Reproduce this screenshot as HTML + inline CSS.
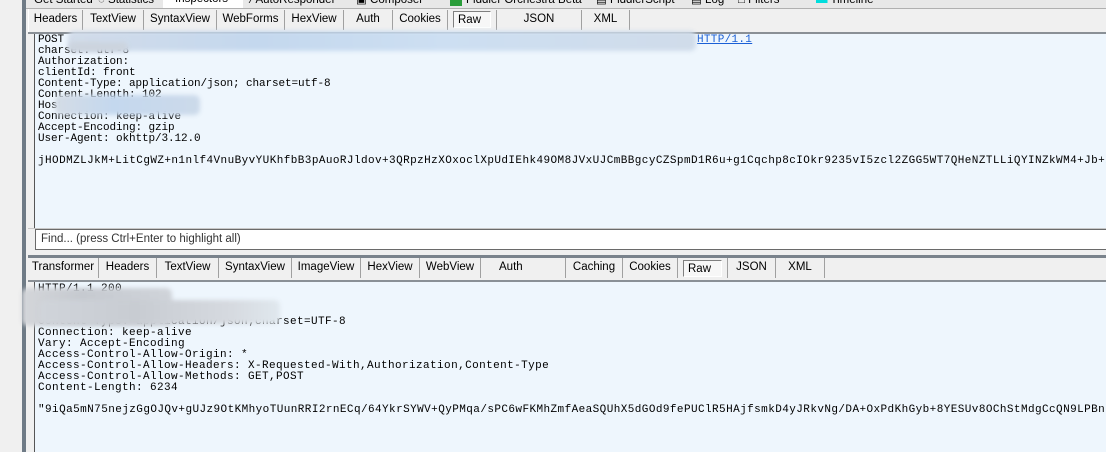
<!DOCTYPE html>
<html><head><meta charset="utf-8"><style>
*{margin:0;padding:0;box-sizing:border-box}
body{width:1106px;height:452px;overflow:hidden;background:#f0f0f0;position:relative;font-family:"Liberation Sans",sans-serif;font-size:11px;color:#000}
.a{position:absolute}
.tab{position:absolute;height:20px;line-height:19px;text-align:center;border-right:1px solid #a0a0a0;font-size:11.5px}
.raw{position:absolute;border:1px solid #808080;border-right-color:#fff;border-bottom-color:#fff;background:#f7f7f7;height:17px;line-height:16px;padding-left:4px;font-size:11.5px}
.txt{position:absolute;background:#eef6fd;font-family:"Liberation Mono",monospace;font-size:11px;line-height:11px;white-space:pre;overflow:hidden;padding-left:3px;letter-spacing:-0.1px}
.b64{letter-spacing:0.42px}
.blur{position:absolute;filter:blur(2px);border-radius:6px}
</style></head><body>
<div class="a" style="left:22px;top:0;width:4px;height:452px;background:#6f7b86"></div>
<div class="a" style="left:26px;top:0;width:1080px;height:452px;background:#f0f0f0"></div>
<div class="a" style="left:26px;top:0;width:1080px;height:9px;background:#e8e8e8;border-bottom:1px solid #b0b0b0;overflow:hidden;font-size:11.5px;line-height:4px">
 <span class="a" style="left:8px;top:-2px">Get Started</span>
 <span class="a" style="left:72px;top:-2px">◌ Statistics</span>
 <span class="a" style="left:137px;top:-3px;width:80px;height:12px;background:#fff;padding-left:12px">Inspectors</span>
 <span class="a" style="left:225px;top:-2px">⁄ AutoResponder</span>
 <span class="a" style="left:330px;top:-2px">▣ Composer</span>
 <span class="a" style="left:424px;top:-3px;width:12px;height:9px;background:#2a9d3a"></span>
 <span class="a" style="left:440px;top:-2px">Fiddler Orchestra Beta</span>
 <span class="a" style="left:570px;top:-2px">▤ FiddlerScript</span>
 <span class="a" style="left:665px;top:-2px">▤ Log</span>
 <span class="a" style="left:712px;top:-2px">□ Filters</span>
 <span class="a" style="left:790px;top:-2px"><span style="color:#0dd">▬</span> Timeline</span>
</div>
<div class="a" style="left:28px;top:9px;width:1078px;height:23px;border-left:1px solid #fff">
 <div class="tab" style="left:0;width:54px;top:1px">Headers</div>
 <div class="tab" style="left:54px;width:61px;top:1px">TextView</div>
 <div class="tab" style="left:115px;width:73px;top:1px">SyntaxView</div>
 <div class="tab" style="left:188px;width:68px;top:1px">WebForms</div>
 <div class="tab" style="left:256px;width:59px;top:1px">HexView</div>
 <div class="tab" style="left:315px;width:49px;top:1px">Auth</div>
 <div class="tab" style="left:364px;width:55px;top:1px">Cookies</div>
 <div class="raw" style="left:424px;top:2px;width:38px">Raw</div>
 <div class="tab" style="left:467px;width:86px;top:1px;border-left:1px solid #a0a0a0">JSON</div>
 <div class="tab" style="left:553px;width:48px;top:1px">XML</div>
</div>
<div class="a" style="left:28px;top:32px;width:1078px;height:2px;background:#8a9096"></div>
<div class="txt" style="left:34px;top:34px;width:1072px;height:194px;border-left:1px solid #555;padding-top:1px">POST 
charset: utf-8
Authorization:
clientId: front
Content-Type: application/json; charset=utf-8
Content-Length: 102
Host: 
Connection: keep-alive
Accept-Encoding: gzip
User-Agent: okhttp/3.12.0

<span class="b64">jHODMZLJkM+LitCgWZ+n1nlf4VnuByvYUKhfbB3pAuoRJldov+3QRpzHzXOxoclXpUdIEhk49OM8JVxUJCmBBgcyCZSpmD1R6u+g1Cqchp8cIOkr9235vI5zcl2ZGG5WT7QHeNZTLLiQYINZkWM4+Jb+/</span></div>
<span class="a" style="left:697px;top:35px;font-family:'Liberation Mono',monospace;font-size:11px;line-height:11px;color:#1a5fd6;text-decoration:underline;background:#eef6fd;letter-spacing:0.3px">HTTP/1.1</span>
<div class="blur" style="left:68px;top:31px;width:628px;height:20px;background:linear-gradient(90deg,#d2dcea,#c4d8ee 30%,#cddff2 60%,#d0dcea)"></div>
<div class="blur" style="left:68px;top:42px;width:60px;height:10px;background:#ccd4de"></div>
<div class="blur" style="left:55px;top:95px;width:145px;height:20px;background:linear-gradient(90deg,#d4dce6,#c4d8ee 40%,#ccdaea)"></div>
<div class="a" style="left:28px;top:228px;width:1078px;height:1px;background:#c8c8c8"></div>
<div class="a" style="left:35px;top:229px;width:1071px;height:21px;background:#fff;border:1px solid #6a6a6a;border-right:none;padding-left:5px;line-height:18px;font-size:11.5px;color:#333">Find... (press Ctrl+Enter to highlight all)</div>
<div class="a" style="left:28px;top:255px;width:1078px;height:3px;background:#7a838c"></div>
<div class="a" style="left:28px;top:258px;width:1078px;height:22px">
 <div class="tab" style="left:0;width:71px">Transformer</div>
 <div class="tab" style="left:71px;width:58px">Headers</div>
 <div class="tab" style="left:129px;width:62px">TextView</div>
 <div class="tab" style="left:191px;width:73px">SyntaxView</div>
 <div class="tab" style="left:264px;width:69px">ImageView</div>
 <div class="tab" style="left:333px;width:59px">HexView</div>
 <div class="tab" style="left:392px;width:61px">WebView</div>
 <div class="tab" style="left:453px;width:85px;text-align:left;padding-left:18px">Auth</div>
 <div class="tab" style="left:538px;width:57px">Caching</div>
 <div class="tab" style="left:595px;width:55px">Cookies</div>
 <div class="raw" style="left:655px;top:2px;width:39px">Raw</div>
 <div class="tab" style="left:699px;width:49px;border-left:1px solid #a0a0a0">JSON</div>
 <div class="tab" style="left:748px;width:49px">XML</div>
</div>
<div class="a" style="left:28px;top:280px;width:1078px;height:2px;background:#8a9096"></div>
<div class="txt" style="left:34px;top:282px;width:1072px;height:170px;border-left:1px solid #555;padding-top:2px;letter-spacing:0.4px">HTTP/1.1 200
Server: 
Date: 
Content-Type: application/json;charset=UTF-8
Connection: keep-alive
Vary: Accept-Encoding
Access-Control-Allow-Origin: *
Access-Control-Allow-Headers: X-Requested-With,Authorization,Content-Type
Access-Control-Allow-Methods: GET,POST
Content-Length: 6234

<span class="b64">"9iQa5mN75nejzGgOJQv+gUJz9OtKMhyoTUunRRI2rnECq/64YkrSYWV+QyPMqa/sPC6wFKMhZmfAeaSQUhX5dGOd9fePUClR5HAjfsmkD4yJRkvNg/DA+OxPdKhGyb+8YESUv8OChStMdgCcQN9LPBn6</span></div>
<div class="blur" style="left:22px;top:288px;width:150px;height:38px;background:linear-gradient(90deg,#d4d6da,#c6cad0 40%,#d0d4da)"></div>
<div class="blur" style="left:40px;top:300px;width:240px;height:24px;background:linear-gradient(90deg,#d0d4da,#c8ccd2 40%,#d6dae0 80%,#e0e8ee)"></div>
</body></html>
